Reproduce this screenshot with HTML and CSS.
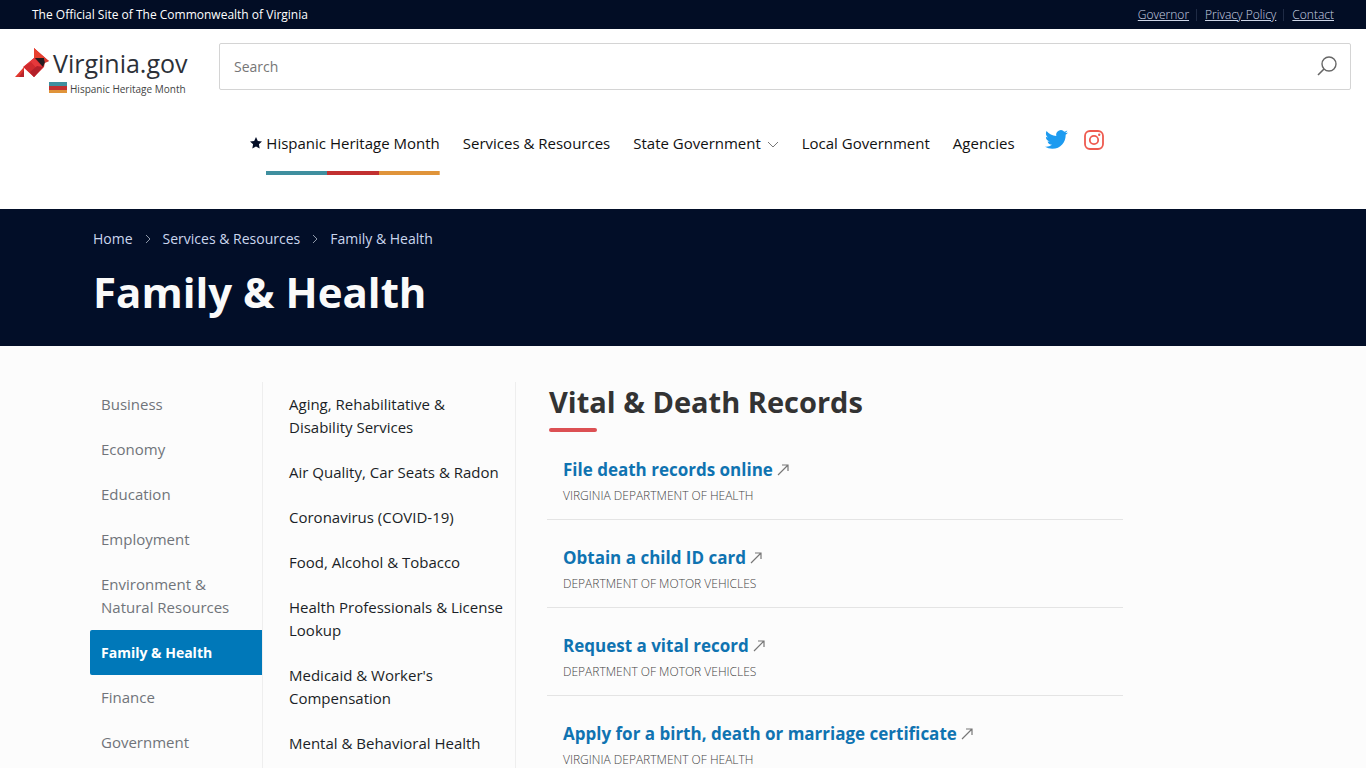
FILE: index.html
```html
<!DOCTYPE html>
<html lang="en">
<head>
    <meta charset="UTF-8">
    <meta name="viewport" content="width=device-width, initial-scale=1.0">
    <title>Family &amp; Health | Virginia.gov</title>
    <link rel="stylesheet" href="styles.css">
</head>
<body>
    <svg class="sprite" aria-hidden="true">
        <symbol id="arrow-out" viewBox="0 0 12 12">
            <path d="M1 11L11 1M5 1h6v6" fill="none" stroke="#777" stroke-width="1.2"/>
        </symbol>
        <symbol id="chevron" viewBox="0 0 6 10">
            <path d="M1 1l4 4-4 4" fill="none" stroke="#8d97a8" stroke-width="1"/>
        </symbol>
    </svg>

    <div class="top-bar">
        <span>The Official Site of The Commonwealth of Virginia</span>
        <div class="top-links">
            <a href="#">Governor</a>
            <a href="#">Privacy Policy</a>
            <a href="#">Contact</a>
        </div>
    </div>

    <header class="site-header">
        <div class="header-row">
            <a class="logo" href="#">
                <span class="logo-main">
                    <svg class="cardinal" width="34" height="30" viewBox="0 0 34 30">
                        <path d="M19 0v10L8 19l11 10 10-10 1-5 4-1z" fill="#d92b2b"/>
                        <path d="M19 0l13 12-7-2h-6z" fill="#e8412f"/>
                        <path d="M9 19l10-9 9 9-4 4-8-8z" fill="#e5383b"/>
                        <path d="M9 19l7-5 8 9-5 6z" fill="#cf2a2e"/>
                        <path d="M19 29l-4-5 7-6 6 1z" fill="#b3202a"/>
                        <path d="M20 10h9l1 4-2 5z" fill="#251c20"/>
                        <path d="M29 10l5 3-4 2z" fill="#d6392e"/>
                        <path d="M0 29l9-10v10z" fill="#e0382f"/>
                        <path d="M4 29l5-7v7z" fill="#b8232b"/>
                    </svg>
                    <span class="logo-name">Virginia.gov</span>
                </span>
                <span class="logo-tag"><span class="flag"></span>Hispanic Heritage Month</span>
            </a>
            <form class="search">
                <input type="text" placeholder="Search" aria-label="Search">
                <button type="button" aria-label="Submit search">
                    <svg width="20" height="20" viewBox="0 0 20 20">
                        <circle cx="12" cy="8" r="7" fill="none" stroke="#666" stroke-width="1.4"/>
                        <path d="M7 13l-6 6" stroke="#666" stroke-width="1.6"/>
                    </svg>
                </button>
            </form>
        </div>

        <nav class="main-nav">
            <a class="featured" href="#">
                <svg width="12" height="12" viewBox="0 0 12 12">
                    <path d="M6 0l1.800 3.900 4.200.500-3.100 2.900.800 4.200L6 9.400l-3.700 2.100.800-4.200L0 4.400l4.200-.500z" fill="#030d26"/>
                </svg>
                <span class="featured-label">Hispanic Heritage Month</span>
            </a>
            <a href="#">Services &amp; Resources</a>
            <a class="has-menu" href="#">State Government
                <svg width="12" height="8" viewBox="0 0 12 8">
                    <path d="M1 1l5 5 5-5" fill="none" stroke="#777" stroke-width="1"/>
                </svg>
            </a>
            <a href="#">Local Government</a>
            <a href="#">Agencies</a>
            <div class="social">
                <a href="#" aria-label="Twitter">
                    <svg width="23" height="23" viewBox="0 0 24 24">
                        <path fill="#1d9bf0" d="M23.950 4.570a10 10 0 0 1-2.820.770 4.960 4.960 0 0 0 2.160-2.720c-.950.550-2 .950-3.130 1.180a4.920 4.920 0 0 0-8.380 4.480C7.690 8.090 4.070 6.130 1.640 3.160a4.820 4.820 0 0 0-.670 2.480c0 1.710.870 3.210 2.190 4.100a4.900 4.900 0 0 1-2.230-.620v.060a4.920 4.920 0 0 0 3.950 4.830 5 5 0 0 1-2.210.080 4.940 4.940 0 0 0 4.600 3.420A9.870 9.870 0 0 1 0 19.540a14 14 0 0 0 7.550 2.210c9.050 0 14-7.500 14-13.980 0-.210 0-.420-.020-.630a9.940 9.940 0 0 0 2.460-2.550z"/>
                    </svg>
                </a>
                <a href="#" aria-label="Instagram">
                    <svg width="20" height="20" viewBox="0 0 20 20" fill="none" stroke="#ee5a4f" stroke-width="1.800">
                        <rect x="1" y="1" width="18" height="18" rx="5"/>
                        <circle cx="10" cy="10" r="4.200"/>
                        <circle cx="15.200" cy="4.800" r="1.200" fill="#ee5a4f" stroke="none"/>
                    </svg>
                </a>
            </div>
        </nav>
    </header>

    <section class="hero">
        <div class="hero-inner">
            <nav class="breadcrumb" aria-label="Breadcrumb">
                <a href="#">Home</a>
                <svg width="6" height="10"><use href="#chevron"/></svg>
                <a href="#">Services &amp; Resources</a>
                <svg width="6" height="10"><use href="#chevron"/></svg>
                <a href="#">Family &amp; Health</a>
            </nav>
            <h1>Family &amp; Health</h1>
        </div>
    </section>

    <main class="content">
        <ul class="side-list categories">
            <li><a href="#">Business</a></li>
            <li><a href="#">Economy</a></li>
            <li><a href="#">Education</a></li>
            <li><a href="#">Employment</a></li>
            <li><a href="#">Environment &amp; Natural Resources</a></li>
            <li><a class="active" href="#">Family &amp; Health</a></li>
            <li><a href="#">Finance</a></li>
            <li><a href="#">Government</a></li>
        </ul>

        <ul class="side-list topics">
            <li><a href="#">Aging, Rehabilitative &amp; Disability Services</a></li>
            <li><a href="#">Air Quality, Car Seats &amp; Radon</a></li>
            <li><a href="#">Coronavirus (COVID-19)</a></li>
            <li><a href="#">Food, Alcohol &amp; Tobacco</a></li>
            <li><a href="#">Health Professionals &amp; License Lookup</a></li>
            <li><a href="#">Medicaid &amp; Worker's Compensation</a></li>
            <li><a href="#">Mental &amp; Behavioral Health</a></li>
        </ul>

        <section class="records">
            <h2>Vital &amp; Death Records</h2>
            <ul class="record-list">
                <li>
                    <a href="#">File death records online <svg width="12" height="12"><use href="#arrow-out"/></svg></a>
                    <p>Virginia Department of Health</p>
                </li>
                <li>
                    <a href="#">Obtain a child ID card <svg width="12" height="12"><use href="#arrow-out"/></svg></a>
                    <p>Department of Motor Vehicles</p>
                </li>
                <li>
                    <a href="#">Request a vital record <svg width="12" height="12"><use href="#arrow-out"/></svg></a>
                    <p>Department of Motor Vehicles</p>
                </li>
                <li>
                    <a href="#">Apply for a birth, death or marriage certificate <svg width="12" height="12"><use href="#arrow-out"/></svg></a>
                    <p>Virginia Department of Health</p>
                </li>
            </ul>
        </section>
    </main>
</body>
</html>
```
FILE: styles.css
```css
* {
    box-sizing: border-box;
}
body {
    margin: 0;
    font-family: "Open Sans", "Noto Sans", sans-serif;
    font-size: 15px;
    color: #1b1f27;
    background: #fcfcfc;
}
a {
    color: inherit;
    text-decoration: none;
}
ul {
    list-style: none;
    margin: 0;
    padding: 0;
}
.sprite {
    display: none;
}

/* top bar */
.top-bar {
    display: flex;
    justify-content: space-between;
    align-items: center;
    height: 29px;
    padding: 0 32px;
    background: #020d25;
    color: #fff;
    font-size: 12px;
}
.top-links {
    display: flex;
    align-items: center;
    color: #cdd5e6;
    font-weight: 300;
}
.top-links a {
    text-decoration: underline;
}
.top-links a + a {
    margin-left: 7px;
}
.top-links a + a::before {
    content: "";
    display: inline-block;
    width: 1px;
    height: 12px;
    margin-right: 8px;
    background: #1f2b45;
    vertical-align: -2px;
}

/* header */
.site-header {
    height: 180px;
    background: #fff;
}
.header-row {
    display: flex;
    gap: 28px;
    padding: 14px 15px 0;
}
.logo {
    display: flex;
    flex-direction: column;
    flex: 0 0 176px;
    white-space: nowrap;
}
.logo-main {
    display: flex;
    align-items: center;
    gap: 4px;
    height: 39px;
}
.logo-name {
    font-size: 25px;
    font-weight: 500;
    color: #2c3038;
    line-height: 39px;
    padding-top: 2px;
}
.logo-tag {
    display: flex;
    align-items: center;
    gap: 3px;
    padding-left: 34px;
    font-size: 10px;
    line-height: 14px;
    color: #444;
}
.flag {
    width: 18px;
    height: 11px;
    margin-bottom: 3px;
    background: linear-gradient(#3f8f9f 0 4px, #c23030 4px 8px, #e0943a 8px);
}
.search {
    display: flex;
    flex: 1;
    height: 47px;
    border: 1px solid #d4d4d4;
    border-radius: 2px;
}
.search input {
    flex: 1;
    padding: 0 14px;
    border: 0;
    background: none;
    font: inherit;
    font-size: 14px;
    color: #333;
}
.search input::placeholder {
    color: #767676;
}
.search button {
    display: flex;
    align-items: center;
    padding: 0 13px 2px;
    border: 0;
    background: none;
}

/* main nav */
.main-nav {
    display: flex;
    justify-content: center;
    align-items: center;
    gap: 23px;
    margin-top: 15px;
    padding-right: 12px;
    line-height: 42px;
    color: #111;
    white-space: nowrap;
}
.featured {
    display: flex;
    align-items: center;
    gap: 4px;
}
.featured-label {
    padding: 11px 0;
    background: linear-gradient(90deg, #3f8f9f 35%, #c23030 35% 65%, #e0943a 65%) bottom / 100% 4px no-repeat;
}
.has-menu svg {
    margin-left: 2px;
}
.social {
    display: flex;
    align-items: center;
    gap: 16px;
    margin-left: 7px;
    padding-bottom: 7px;
}
.social svg {
    display: block;
}

/* hero */
.hero {
    background: #020e28;
    height: 137px;
}
.hero-inner {
    max-width: 1180px;
    margin: 0 auto;
    padding-top: 18px;
}
.breadcrumb {
    display: flex;
    align-items: center;
    gap: 12px;
    line-height: 24px;
    font-size: 14px;
    color: #cbd6ee;
}
.hero h1 {
    margin: 11px 0 0;
    font-size: 42px;
    line-height: 60px;
    font-weight: 700;
    color: #fafafa;
}

/* content columns */
.content {
    display: grid;
    grid-template-columns: 173px 253px 1fr;
    max-width: 1186px;
    margin: 0 auto;
    padding-top: 36px;
}
.side-list {
    border-right: 1px solid #eee;
    line-height: 23px;
}
.side-list a {
    display: block;
    padding: 11px;
}
.categories {
    color: #70747a;
}
.categories .active {
    background: #0078b9;
    border-radius: 2px 0 0 2px;
    color: #fff;
    font-size: 14px;
    font-weight: 700;
}
.topics a {
    padding: 11px 10px 11px 26px;
}

/* records */
.records {
    max-width: 607px;
    padding-left: 31px;
}
.records h2 {
    margin: 0 0 0 2px;
    font-size: 29px;
    line-height: 40px;
    font-weight: 700;
    color: #333;
}
.records h2::after {
    content: "";
    display: block;
    width: 48px;
    height: 4px;
    margin-top: 6px;
    border-radius: 2px;
    background: #dc5053;
}
.record-list li {
    padding: 26px 16px 13px;
    border-bottom: 1px solid #e4e4e4;
}
.record-list li:last-child {
    border-bottom: 0;
}
.record-list a {
    display: block;
    font-size: 17px;
    line-height: 24px;
    font-weight: 700;
    color: #0f73b1;
}
.record-list p {
    margin: 4px 0 0;
    font-size: 12px;
    line-height: 20px;
    font-weight: 300;
    color: #444;
    text-transform: uppercase;
}
```
